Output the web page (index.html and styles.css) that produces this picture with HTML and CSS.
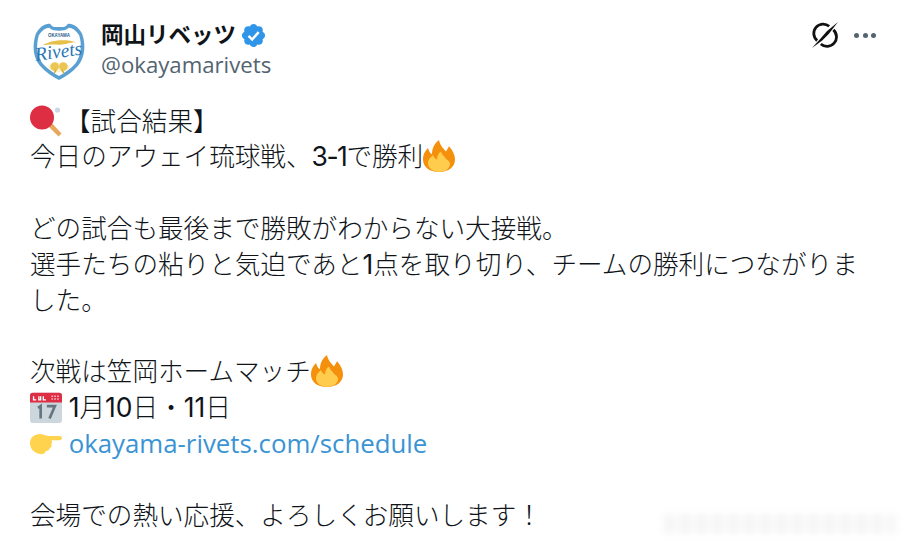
FILE: index.html
```html
<!DOCTYPE html>
<html lang="ja">

<head>
    <meta charset="UTF-8">
    <meta name="viewport" content="width=device-width, initial-scale=1.0">
    <title>岡山リベッツ</title>
    <link rel="stylesheet" href="styles.css">
</head>

<body>
    <div class="tweet">
        <div class="head">
            <svg class="avatar" viewBox="0 0 56 60">
                <path d="M4 12 C8 5 14 1 19 2 C21 6 25 5 28 5 C31 5 35 6 37 2 C42 1 48 5 52 12 C56 24 55 36 48 45 C42 52 34 57 28 60 C22 57 14 52 8 45 C1 36 0 24 4 12Z" fill="#5a9fd2"/>
                <path d="M7 14 C10 9 14 6 18 6 C21 9 25 9 28 9 C31 9 35 9 38 6 C42 6 46 9 49 14 C52 24 51 35 45 43 C40 49 33 53 28 56 C23 53 16 49 11 43 C5 35 4 24 7 14Z" fill="#fff"/>
                <path d="M11 24 C19 19 35 17 46 21 C38 21 34 24 28 23.5 C22 23 17 23 11 24Z" fill="#e6c04a"/>
                <text class="badge-small" x="28" y="16" text-anchor="middle">OKAYAMA</text>
                <text class="badge-big" x="28" y="37" text-anchor="middle" transform="rotate(-8 28 34)">Rivets</text>
                <ellipse cx="28" cy="47" rx="11" ry="5" fill="#fdf3cf"/>
                <circle cx="23.5" cy="46" r="4.4" fill="#eac552"/>
                <circle cx="32.5" cy="46" r="4.4" fill="#eac552"/>
                <path d="M25 49.5 L23 53 M31 49.5 L33 53" stroke="#d9a92f" stroke-width="1.6"/>
            </svg>
            <div class="names">
                <div class="name">岡山リベッツ
                    <svg class="verified" viewBox="0 0 24 24">
                        <path d="M22.25 12c0-1.43-.88-2.67-2.19-3.34.46-1.39.2-2.9-.81-3.91s-2.52-1.27-3.91-.81c-.66-1.31-1.91-2.19-3.34-2.19s-2.67.88-3.33 2.19c-1.4-.46-2.91-.2-3.92.81s-1.26 2.52-.8 3.91C2.63 9.33 1.75 10.57 1.75 12s.88 2.67 2.2 3.34c-.46 1.39-.21 2.9.8 3.91s2.52 1.26 3.91.81c.67 1.31 1.91 2.19 3.34 2.19s2.68-.88 3.34-2.19c1.39.45 2.9.2 3.91-.81s1.27-2.52.81-3.91c1.31-.67 2.19-1.91 2.19-3.34z" fill="#2f95e8"/>
                        <path d="M7.6 12.4 L10.8 15.6 L16.6 9" fill="none" stroke="#fff" stroke-width="2.2"/>
                    </svg>
                </div>
                <div class="handle">@okayamarivets</div>
            </div>
            <div class="actions">
                <svg class="grok" viewBox="0 0 28 28">
                    <path d="M18.5 4.6 A10 10 0 0 0 5.5 20" fill="none" stroke="#111" stroke-width="3"/>
                    <path d="M9.5 23.6 A10 10 0 0 0 23 8.5" fill="none" stroke="#111" stroke-width="3"/>
                    <path d="M28 0 L16 10 L9 18 L0 28 L11 20 L18 13Z" fill="#111"/>
                </svg>
                <div class="dots"><span></span><span></span><span></span></div>
            </div>
        </div>

        <div class="body">
            <p>
                <svg class="emoji ping" viewBox="0 0 32 32">
                    <circle cx="27.5" cy="5" r="2.6" fill="#ccd6e6"/>
                    <path d="M16 19 L28.5 31.5 L31.5 28.5 L20 16Z" fill="#e8a85a"/>
                    <circle cx="12" cy="12.5" r="12" fill="#dd2e44"/>
                </svg>【試合結果】<br>
                今日のアウェイ琉球戦、<span class="num score">3-1</span>で勝利<svg class="emoji" viewBox="2 0 32 36" preserveAspectRatio="none">
                    <path d="M18 36 C8 36 2 30 2 22 C2 16 4 13 7 9 C8 13 9 15 11 16 C11 10 13 4 18 0 C19 6 22 9 25 13 C26 11 27 9 28 7 C32 12 34 17 34 22 C34 30 28 36 18 36Z" fill="#f4900c"/>
                    <path d="M18 36 C12 36 7 32 7 26 C7 22 9 20 12 17 C13 20 14 21 16 22 C16 19 17 15 20 13 C21 17 23 18 25 21 C27 23 29 24 29 27 C29 32 24 36 18 36Z" fill="#ffcc4d"/>
                </svg><br>
                <br>
                どの試合も最後まで勝敗がわからない大接戦。<br>
                選手たちの粘りと気迫であと<span class="num">1</span>点を取り切り、チームの勝利につながりま<br>
                した。<br>
                <br>
                次戦は笠岡ホームマッチ<svg class="emoji" viewBox="2 0 32 36" preserveAspectRatio="none">
                    <path d="M18 36 C8 36 2 30 2 22 C2 16 4 13 7 9 C8 13 9 15 11 16 C11 10 13 4 18 0 C19 6 22 9 25 13 C26 11 27 9 28 7 C32 12 34 17 34 22 C34 30 28 36 18 36Z" fill="#f4900c"/>
                    <path d="M18 36 C12 36 7 32 7 26 C7 22 9 20 12 17 C13 20 14 21 16 22 C16 19 17 15 20 13 C21 17 23 18 25 21 C27 23 29 24 29 27 C29 32 24 36 18 36Z" fill="#ffcc4d"/>
                </svg><br>
                <svg class="emoji" viewBox="0 0 36 36">
                    <path d="M3 2 H33 A3 3 0 0 1 36 5 V33 A3 3 0 0 1 33 36 H3 A3 3 0 0 1 0 33 V5 A3 3 0 0 1 3 2Z" fill="#ccd6dd"/>
                    <path d="M3 2 H33 A3 3 0 0 1 36 5 V13 H0 V5 A3 3 0 0 1 3 2Z" fill="#dd2e44"/>
                    <path d="M4 6 V10 H7 M10 6 V10 H12 V6 M15 6 V10 H18" fill="none" stroke="#fff" stroke-width="1.5"/>
                    <path d="M24 6 H33 M24 9 H33" stroke="#f4abba" stroke-width="1.6" stroke-dasharray="2 1.2"/>
                    <path d="M9 19 L12 17 V31 M19 17 H28 L22 31" fill="none" stroke="#66757f" stroke-width="3"/>
                </svg> <span class="num">1</span>月<span class="num">10</span>日・<span class="num">11</span>日<br>
                <svg class="emoji" viewBox="0 0 36 36">
                    <path d="M0 18 C0 12 5 8 11 8 C15 8 17 10 21 10 H33 C37 10 37 15 33 15 H24 C25 16 25 18 24 19 C25 21 24 23 22 24 C22 26 20 27 18 27 C16 31 13 31 10 30 C4 29 0 24 0 18Z" fill="#ffd34d"/>
                </svg> <a href="#">okayama-rivets.com/schedule</a><br>
                <br>
                会場での熱い応援、よろしくお願いします！
            </p>
        </div>
    </div>
    <div class="watermark"></div>
</body>

</html>
```

FILE: styles.css
```css
* {
    margin: 0;
    padding: 0;
    box-sizing: border-box;
}

body {
    width: 904px;
    height: 546px;
    overflow: hidden;
    background-color: #fff;
    color: #0f1419;
    font-family: "Open Sans", "Noto Sans CJK JP", sans-serif;
}

.tweet {
    padding: 18px 28px 0 30px;
}

.head {
    display: flex;
    align-items: center;
    height: 66px;
}

.avatar {
    width: 54px;
    height: 58px;
    margin: 0 1px 0 2px;
}

.badge-small {
    font-family: "Liberation Sans", sans-serif;
    font-size: 4.6px;
    font-weight: bold;
    fill: #2a5d8c;
}

.badge-big {
    font-family: "Liberation Serif", serif;
    font-style: italic;
    font-size: 20px;
    fill: #2a76b4;
}

.names {
    margin-left: 14px;
    margin-bottom: 2px;
}

.name {
    display: flex;
    align-items: center;
    gap: 4px;
    font-size: 22.5px;
    font-weight: bold;
    line-height: 30px;
}

.verified {
    width: 27px;
    height: 27px;
}

.handle {
    font-size: 22.2px;
    line-height: 30px;
    color: #536471;
}

.actions {
    display: flex;
    align-items: center;
    gap: 16px;
    align-self: flex-start;
    margin-top: 4px;
    margin-left: auto;
}

.grok {
    width: 26px;
    height: 26px;
}

.dots {
    display: flex;
    gap: 3.3px;
}

.dots span {
    width: 5px;
    height: 5px;
    border-radius: 50%;
    background-color: #536471;
}

.body {
    margin-top: 19.5px;
    font-size: 25.6px;
    font-weight: 300;
    line-height: 35.85px;
}

.body a {
    color: #3a94d4;
    font-size: 25.8px;
    font-weight: 400;
    text-decoration: none;
}

.num {
    font-family: "Inter", sans-serif;
    font-size: 26.5px;
    font-weight: 400;
    line-height: 1;
}

.score {
    letter-spacing: -1.5px;
}

.emoji {
    width: 32px;
    height: 32px;
    margin: -6px 0;
    vertical-align: 0;
}

.ping {
    margin-right: 3px;
}

.watermark {
    position: absolute;
    left: 665px;
    top: 514px;
    width: 230px;
    height: 20px;
    background: repeating-linear-gradient(90deg, #f0f0f0 0 8px, #fbfbfb 8px 16px);
    filter: blur(4px);
    opacity: 0.8;
}
```
